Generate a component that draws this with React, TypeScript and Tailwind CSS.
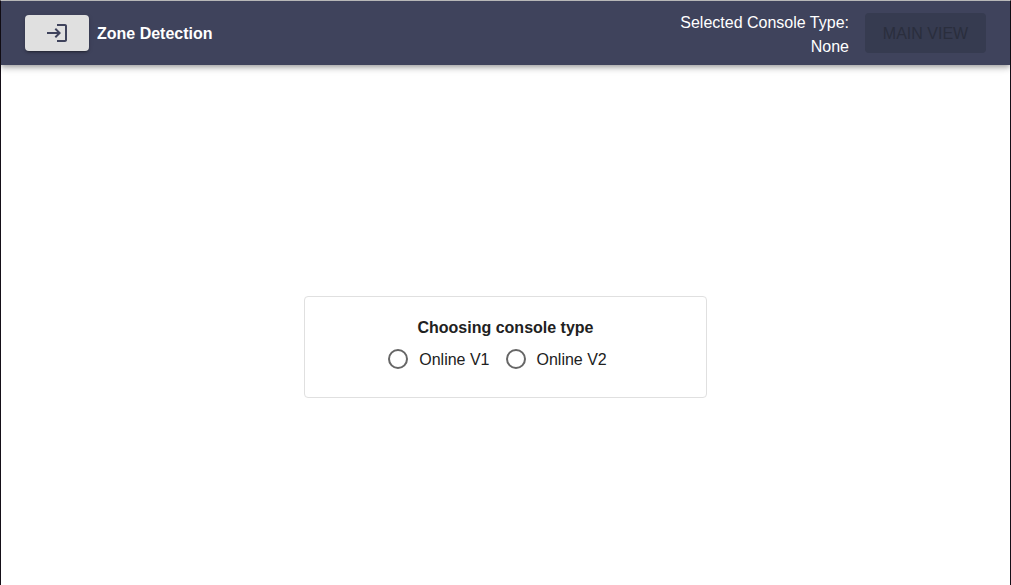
import { useState } from "react";

const consoleTypes = ["Online V1", "Online V2"];

function LoginIcon() {
  return (
    <svg viewBox="0 0 24 24" className="size-6" fill="currentColor" aria-hidden="true">
      <path d="M11 7 9.6 8.4l2.6 2.6H2v2h10.2l-2.6 2.6L11 17l5-5-5-5zm9 12h-8v2h8c1.1 0 2-.9 2-2V5c0-1.1-.9-2-2-2h-8v2h8v14z" />
    </svg>
  );
}

function Header({ selected }: { selected: string | null }) {
  return (
    <header className="flex h-16 shrink-0 items-center justify-between bg-[#3f435c] px-6 text-white shadow-[0_2px_4px_-1px_rgba(0,0,0,0.2),0_4px_5px_0_rgba(0,0,0,0.14),0_1px_10px_0_rgba(0,0,0,0.12)]">
      <div className="flex items-center gap-2">
        <button
          type="button"
          aria-label="Log in"
          className="flex h-9 w-16 items-center justify-center rounded bg-[#e0e0e0] text-[#3f435c] shadow-[0_3px_1px_-2px_rgba(0,0,0,0.2),0_2px_2px_0_rgba(0,0,0,0.14),0_1px_5px_0_rgba(0,0,0,0.12)]"
        >
          <LoginIcon />
        </button>
        <h1 className="pt-0.5 font-bold">Zone Detection</h1>
      </div>
      <div className="flex items-center gap-4">
        <p className="pt-1 text-right">
          Selected Console Type:
          <br />
          {selected ?? "None"}
        </p>
        <button
          type="button"
          disabled={!selected}
          className="h-10 w-[121px] rounded bg-[#e0e0e0] pt-0.5 text-[#3f435c] disabled:bg-[#363b50] disabled:text-[#2a2e3d]"
        >
          MAIN VIEW
        </button>
      </div>
    </header>
  );
}

export default function App() {
  const [selected, setSelected] = useState<string | null>(null);

  return (
    <div className="flex min-h-screen flex-col border-x border-t border-x-[#150f18] border-t-[#c4c4c4] bg-white font-['Liberation_Sans',Arial,sans-serif] text-base text-[#212121]">
      <Header selected={selected} />
      <main className="flex flex-1 items-center justify-center pt-11">
        <fieldset className="w-2/5 rounded border border-[#e0e0e0] px-4 pt-4 pb-5" aria-labelledby="console-type">
          <h2 id="console-type" className="pt-0.5 text-center leading-[26px] font-bold">
            Choosing console type
          </h2>
          <div className="flex h-9 items-center justify-center">
            {consoleTypes.map((type) => (
              <label key={type} className="mr-4 flex items-center gap-[11px]">
                <input
                  type="radio"
                  name="console"
                  value={type}
                  checked={selected === type}
                  onChange={() => setSelected(type)}
                  className="size-5 appearance-none rounded-full border-2 border-[#666666] checked:border-[6px]"
                />
                <span className="pt-0.5">{type}</span>
              </label>
            ))}
          </div>
        </fieldset>
      </main>
    </div>
  );
}
